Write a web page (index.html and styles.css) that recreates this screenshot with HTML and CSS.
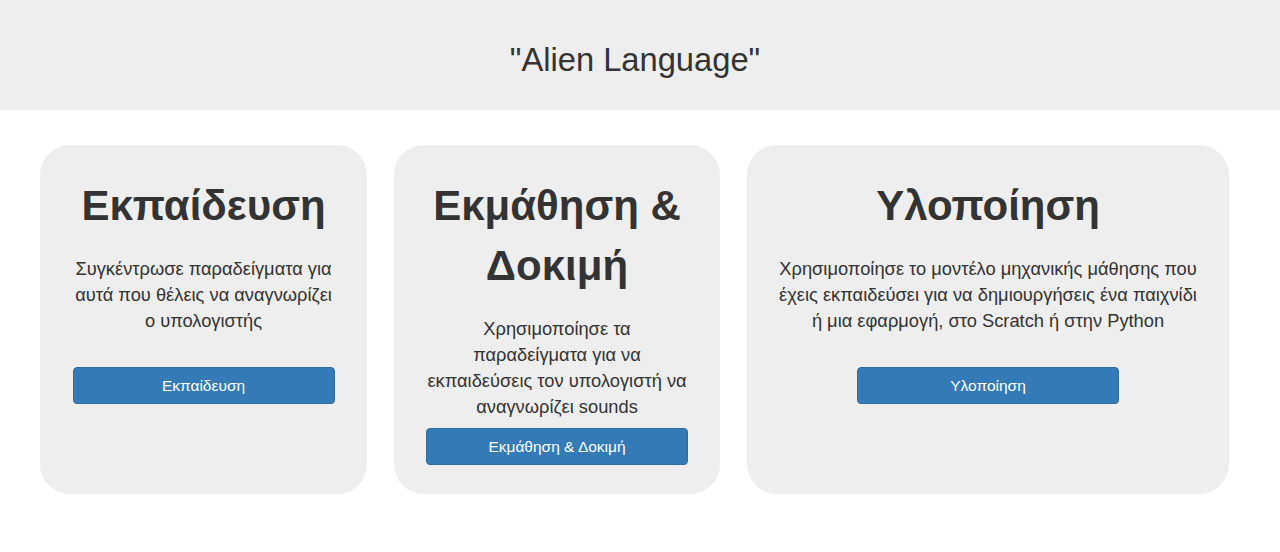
FILE: index.html
```html
<!DOCTYPE html>
<html lang="el">
<head>
<meta charset="utf-8">
<title>Alien Language</title>
<link rel="stylesheet" href="styles.css">
</head>
<body>
<header class="page-header">
  <h1 class="page-title">"Alien Language"</h1>
</header>
<main class="cards">
  <section class="card card-first">
    <h2 class="card-title">Εκπαίδευση</h2>
    <p class="card-text">Συγκέντρωσε παραδείγματα για αυτά που θέλεις να αναγνωρίζει ο υπολογιστής</p>
    <button class="btn">Εκπαίδευση</button>
  </section>
  <section class="card card-second">
    <h2 class="card-title">Εκμάθηση &amp; Δοκιμή</h2>
    <p class="card-text">Χρησιμοποίησε τα παραδείγματα για να εκπαιδεύσεις τον υπολογιστή να αναγνωρίζει sounds</p>
    <button class="btn">Εκμάθηση &amp; Δοκιμή</button>
  </section>
  <section class="card card-wide">
    <h2 class="card-title">Υλοποίηση</h2>
    <p class="card-text">Χρησιμοποίησε το μοντέλο μηχανικής μάθησης που έχεις εκπαιδεύσει για να δημιουργήσεις ένα παιχνίδι ή μια εφαρμογή, στο Scratch ή στην Python</p>
    <button class="btn">Υλοποίηση</button>
  </section>
</main>
</body>
</html>
```

FILE: styles.css
```css
html, body {
  margin: 0;
  padding: 0;
  background: #fff;
  font-family: "Liberation Sans", Arial, sans-serif;
  color: #333;
}

.page-header {
  background: #eeeeee;
  height: 110px;
  box-sizing: border-box;
  padding: 42px 10px 0 0;
  text-align: center;
}

.page-title {
  margin: 0;
  font-size: 32.7px;
  font-weight: 400;
  line-height: 1.1;
  color: #333;
}

.cards {
  display: flex;
  gap: 27px;
  padding: 35px 0 0 40px;
  align-items: stretch;
}

.card {
  background: #eeeeee;
  border-radius: 30px;
  box-sizing: border-box;
  padding: 31px 32px 29px;
  text-align: center;
  display: flex;
  flex-direction: column;
}

.card-first { width: 327px; }
.card-second { width: 326px; }
.card-wide { width: 482px; padding-left: 29px; padding-right: 29px; }

.card-title {
  margin: 0 0 20px;
  font-size: 42px;
  font-weight: 700;
  line-height: 60px;
  color: #333;
}

.card-text {
  margin: 0 0 8px;
  font-size: 18.3px;
  line-height: 26px;
  min-height: 103px;
}

.btn {
  display: block;
  width: 262px;
  margin: 0 auto;
  box-sizing: border-box;
  padding: 7px 12px;
  font-family: "Liberation Sans", Arial, sans-serif;
  font-size: 15.5px;
  line-height: 21px;
  color: #fff;
  background: #337ab7;
  border: 1px solid #2e6da4;
  border-radius: 4px;
  cursor: pointer;
}
```
